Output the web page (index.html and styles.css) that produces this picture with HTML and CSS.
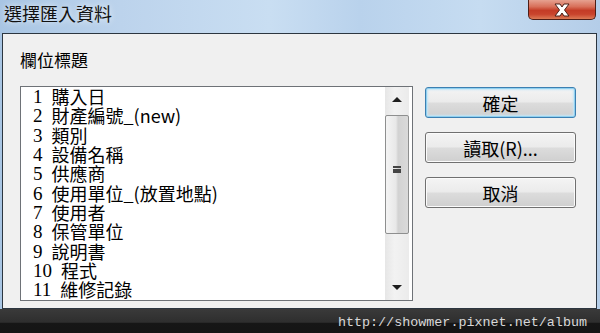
FILE: index.html
```html
<!DOCTYPE html>
<html lang="zh-Hant">
<head>
    <meta charset="UTF-8">
    <title>選擇匯入資料</title>
    <link rel="stylesheet" href="styles.css">
</head>
<body>
    <div class="window">
        <div class="titlebar">
            <span class="title">選擇匯入資料</span>
            <button class="close" type="button" aria-label="關閉">
                <svg width="22" height="14" viewBox="0 0 22 14">
                    <path d="M4 1 H9 L11 4 L13 1 H18 L13.5 7 L18 13 H13 L11 10 L9 13 H4 L8.5 7 Z"
                          fill="#fff" stroke="#4a2018" stroke-width="1" stroke-linejoin="round"/>
                </svg>
            </button>
        </div>

        <div class="dialog">
            <div class="label">欄位標題</div>
            <div class="content">
                <div class="listbox">
                    <ul class="items">
                        <li><span class="num">1</span>購入日</li>
                        <li><span class="num">2</span>財產編號_(new)</li>
                        <li><span class="num">3</span>類別</li>
                        <li><span class="num">4</span>設備名稱</li>
                        <li><span class="num">5</span>供應商</li>
                        <li><span class="num">6</span>使用單位_(放置地點)</li>
                        <li><span class="num">7</span>使用者</li>
                        <li><span class="num">8</span>保管單位</li>
                        <li><span class="num">9</span>說明書</li>
                        <li><span class="num">10</span>程式</li>
                        <li><span class="num">11</span>維修記錄</li>
                    </ul>
                    <div class="scrollbar">
                        <div class="arrow up"></div>
                        <div class="thumb">
                            <span class="grip"></span>
                        </div>
                        <div class="track"></div>
                        <div class="arrow down"></div>
                    </div>
                </div>
                <div class="buttons">
                    <button class="btn default" type="button">確定</button>
                    <button class="btn" type="button">讀取(R)...</button>
                    <button class="btn" type="button">取消</button>
                </div>
            </div>
        </div>

        <div class="footer">
            <span class="watermark">http://showmer.pixnet.net/album</span>
        </div>
    </div>
</body>
</html>
```

FILE: styles.css
```css
body {
    margin: 0;
    overflow: hidden;
    font-family: "Noto Sans CJK TC", "Liberation Sans", sans-serif;
    background-color: #1c1c1c;
}

.window {
    width: 600px;
    height: 333px;
    display: flex;
    flex-direction: column;
    background: linear-gradient(90deg, #a8c5e3 0%, #bcd3ec 20%, #c9def2 45%, #b9d2ec 60%, #c6dcf1 80%, #b4cde8 100%);
}

.titlebar {
    height: 33px;
    display: flex;
    align-items: flex-start;
    padding-left: 4px;
    padding-right: 4px;
}

.title {
    font-size: 18px;
    line-height: 26px;
    color: #111;
    text-shadow: 0 0 6px rgba(255, 255, 255, 0.9);
}

.close {
    margin-left: auto;
    width: 68px;
    height: 20px;
    padding: 0;
    border: 1px solid #4e1e16;
    border-top: none;
    border-radius: 0 0 5px 5px;
    background: linear-gradient(180deg, #e6a190 0%, #d8705a 35%, #c43c26 55%, #c9442c 75%, #dc7a55 100%);
    display: flex;
    align-items: center;
    justify-content: center;
}

.dialog {
    flex: 1;
    margin: 0 3px 0 2px;
    border: 1px solid #2c3640;
    background-color: #f0f0f0;
    padding: 16px 0 0 17px;
}

.label {
    font-size: 17px;
    line-height: 20px;
    color: #000;
}

.content {
    display: flex;
    margin-top: 16px;
}

.listbox {
    width: 391px;
    height: 213px;
    border: 1px solid #6e7277;
    background-color: #fff;
    display: flex;
}

.items {
    flex: 1;
    list-style: none;
    margin: 0;
    padding: 0 0 0 12px;
    overflow: hidden;
}

.items li {
    display: flex;
    align-items: center;
    height: 19.3px;
    font-size: 18px;
    line-height: 19px;
    color: #000;
    white-space: nowrap;
}

.num {
    font-family: "Liberation Serif", serif;
    font-size: 19px;
    margin-right: 9px;
}

.scrollbar {
    width: 24px;
    margin-right: 3px;
    display: flex;
    flex-direction: column;
    background: linear-gradient(90deg, #e6e6e6, #f2f2f2 40%, #ebebeb);
}

.arrow {
    height: 25px;
    display: flex;
    align-items: center;
    justify-content: center;
}

.arrow::before {
    content: "";
    width: 0;
    height: 0;
    border-left: 5px solid transparent;
    border-right: 5px solid transparent;
}

.up::before {
    border-bottom: 5px solid #1e1e1e;
}

.down::before {
    border-top: 5px solid #1e1e1e;
}

.thumb {
    height: 117px;
    margin: 3px 0 0 0;
    border: 1px solid #8e8f8f;
    border-radius: 2px;
    background: linear-gradient(90deg, #f4f4f4 0%, #e8e8e8 45%, #d2d2d2 55%, #dadada 100%);
    display: flex;
    align-items: center;
    justify-content: center;
}

.grip {
    width: 8px;
    height: 7px;
    border-top: 2px solid #444;
    border-bottom: 2px solid #444;
    box-sizing: border-box;
    background: linear-gradient(180deg, transparent 1px, #444 1px, #444 3px, transparent 3px);
    margin-top: -10px;
}

.track {
    flex: 1;
}

.buttons {
    display: flex;
    flex-direction: column;
    gap: 14px;
    margin-left: 12px;
    padding-top: 1px;
}

.btn {
    width: 151px;
    height: 31px;
    padding: 0;
    font-family: "Noto Sans CJK TC", "Liberation Sans", sans-serif;
    font-size: 18px;
    color: #000;
    border: 1px solid #707070;
    border-radius: 3px;
    background: linear-gradient(180deg, #f4f4f4 0%, #ebebeb 48%, #dcdcdc 52%, #cfcfcf 100%);
    box-shadow: inset 0 0 0 1px #fbfbfb;
    cursor: pointer;
}

.btn.default {
    border-color: #3c7fb1;
    box-shadow: inset 0 0 0 1px #8fd0f0, inset 0 0 2px 2px #c4e5f6;
}

.footer {
    height: 24px;
    display: flex;
    justify-content: flex-end;
    align-items: center;
    padding-right: 13px;
    background: linear-gradient(180deg, #3a3a3a 0%, #2e2e2e 55%, #161616 60%, #141414 100%);
}

.watermark {
    font-family: "Liberation Mono", monospace;
    font-size: 13.4px;
    color: #d8d8d8;
    margin-top: 2px;
}
```
